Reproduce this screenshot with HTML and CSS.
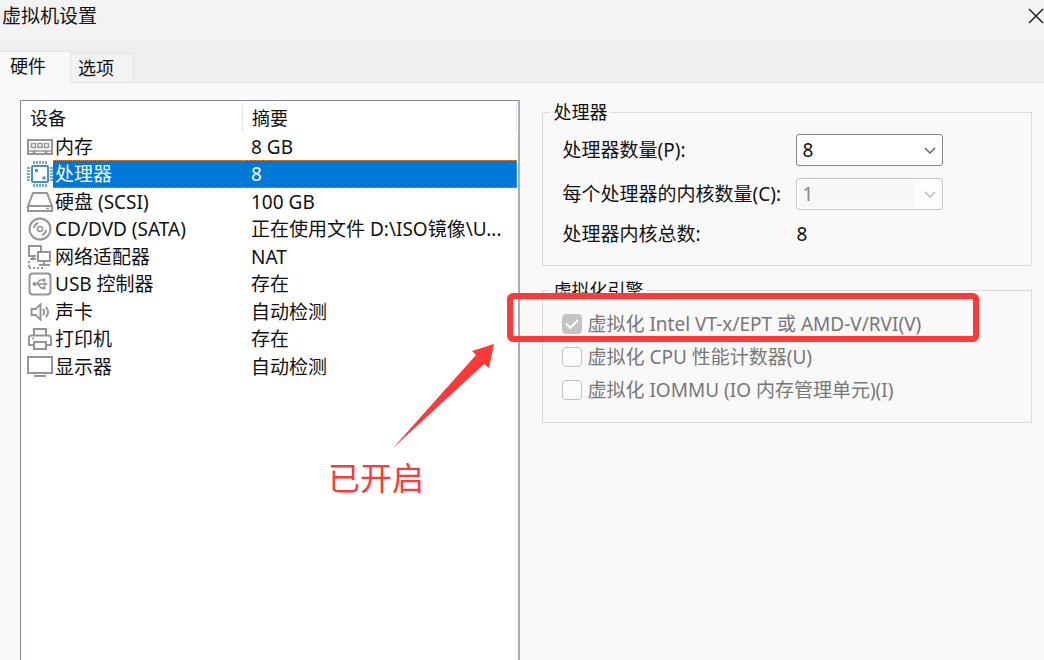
FILE: index.html
```
<!DOCTYPE html>
<html lang="zh-CN">
<head>
    <meta charset="utf-8">
    <title>虚拟机设置</title>
    <link rel="stylesheet" href="styles.css">
</head>
<body>
    <div class="dialog">
        <header class="titlebar">
            <h1>虚拟机设置</h1>
            <button class="close" type="button" aria-label="关闭">
                <svg width="16" height="16" viewBox="0 0 16 16"><path d="M1 1l14 14M15 1L1 15"/></svg>
            </button>
        </header>

        <nav class="tabs">
            <button class="tab active" type="button">硬件</button>
            <button class="tab" type="button">选项</button>
        </nav>

        <main class="content">
            <section class="devices">
                <table>
                    <colgroup>
                        <col class="col-icon">
                        <col class="col-name">
                        <col>
                    </colgroup>
                    <thead>
                        <tr><th class="head-name" colspan="2">设备</th><th class="head-summary">摘要</th></tr>
                    </thead>
                    <tbody>
                        <tr>
                            <td class="icon"><svg viewBox="0 0 26 26"><path d="M1 6h24v14h-5l-1-2-1 2H8l-1-2-1 2H1z"/><path class="thin" d="M4.500 9.500h4v4h-4zM11 9.500h4v4h-4zM17.500 9.500h4v4h-4zM2 17h22"/></svg></td>
                            <td>内存</td><td>8 GB</td>
                        </tr>
                        <tr class="selected">
                            <td class="icon cpu"><svg viewBox="0 0 26 26"><rect x="5" y="5" width="16" height="16" rx="1"/><path class="pins" d="M7 0v3M10 0v3M13 0v3M16 0v3M19 0v3M7 23v3M10 23v3M13 23v3M16 23v3M19 23v3M0 7h3M0 10h3M0 13h3M0 16h3M0 19h3M23 7h3M23 10h3M23 13h3M23 16h3M23 19h3"/><path class="dots" d="M8 8h3v3H8zM15.500 15.500h3v3h-3z"/></svg></td>
                            <td>处理器</td><td>8</td>
                        </tr>
                        <tr>
                            <td class="icon"><svg viewBox="0 0 26 26"><path d="M6 4h14l5 13v5H1v-5zM1 17h24"/><path class="thin" d="M19 19.500h3"/></svg></td>
                            <td>硬盘 (SCSI)</td><td>100 GB</td>
                        </tr>
                        <tr>
                            <td class="icon"><svg viewBox="0 0 26 26"><circle cx="13" cy="13" r="10.500"/><circle class="thin" cx="13" cy="13" r="2.500"/><path d="M7 12a6 6 0 0 1 4-5M19 14a6 6 0 0 1-4 5"/></svg></td>
                            <td>CD/DVD (SATA)</td><td>正在使用文件 D:\ISO镜像\U...</td>
                        </tr>
                        <tr>
                            <td class="icon"><svg viewBox="0 0 26 26"><path d="M9 12H2V2h12v5M6 12v3M3 15h6M11 8h12v9H11zM17 17v3M12 21h11"/><path class="dashed" d="M2 17v8M2 24h14"/></svg></td>
                            <td>网络适配器</td><td>NAT</td>
                        </tr>
                        <tr>
                            <td class="icon"><svg viewBox="0 0 26 26"><rect x="2.500" y="2.500" width="21" height="21" rx="3"/><path class="thin" d="M7 13h10M9.500 13l3.500-4h3M11 13l3 4h2"/><circle class="fill" cx="7.500" cy="13" r="2"/><path class="fill" d="M17 11l4 2-4 2zM15.500 7.500h3v3h-3zM15.500 15.500h3v3h-3z"/></svg></td>
                            <td>USB 控制器</td><td>存在</td>
                        </tr>
                        <tr>
                            <td class="icon"><svg viewBox="0 0 26 26"><path d="M4.500 10h4l5-4.500v15l-5-4.500h-4zM16 10q2.500 3 0 6M19 8q4 5 0 10"/></svg></td>
                            <td>声卡</td><td>自动检测</td>
                        </tr>
                        <tr>
                            <td class="icon"><svg viewBox="0 0 26 26"><path d="M7 9V3h12v6M7 19H2v-7q0-2.500 2.500-2.500h17Q24 9.500 24 12v7h-5M7 16h12v7H7z"/><path class="thin" d="M5 12.500h2"/></svg></td>
                            <td>打印机</td><td>存在</td>
                        </tr>
                        <tr>
                            <td class="icon"><svg viewBox="0 0 26 26"><path d="M1 3h24v16H1zM7 22h12"/></svg></td>
                            <td>显示器</td><td>自动检测</td>
                        </tr>
                    </tbody>
                </table>

                <div class="note">
                    <svg width="104" height="106" viewBox="0 0 104 106"><path d="M1 104L84 11 80 7 102 0 97 24 92 20z"/></svg>
                    <p>已开启</p>
                </div>
            </section>

            <form class="settings">
                <fieldset>
                    <legend>处理器</legend>
                    <div class="fields">
                        <label for="cpus">处理器数量(P):</label>
                        <div class="select">
                            <select id="cpus"><option>8</option></select>
                            <svg width="12" height="8" viewBox="0 0 12 8"><path d="M1 1l5 5 5-5"/></svg>
                        </div>
                        <label for="cores">每个处理器的内核数量(C):</label>
                        <div class="select disabled">
                            <select id="cores" disabled><option>1</option></select>
                            <svg width="12" height="8" viewBox="0 0 12 8"><path d="M1 1l5 5 5-5"/></svg>
                        </div>
                        <label for="total">处理器内核总数:</label>
                        <output id="total">8</output>
                    </div>
                </fieldset>

                <fieldset class="engine">
                    <legend>虚拟化引擎</legend>
                    <div class="checks">
                        <label><input type="checkbox" checked disabled>虚拟化 Intel VT-x/EPT 或 AMD-V/RVI(V)</label>
                        <label><input type="checkbox" disabled>虚拟化 CPU 性能计数器(U)</label>
                        <label><input type="checkbox" disabled>虚拟化 IOMMU (IO 内存管理单元)(I)</label>
                    </div>
                    <div class="highlight"></div>
                </fieldset>
            </form>
        </main>
    </div>
</body>
</html>
```
FILE: styles.css
```
* {
    box-sizing: border-box;
}

body {
    margin: 0;
    font-family: "Noto Sans", "Noto Sans CJK SC", sans-serif;
    font-size: 18px;
    line-height: 24px;
    color: #111;
    background-color: #f9f9f9;
}

button,
select {
    font: inherit;
    color: inherit;
}

svg {
    display: block;
    fill: none;
}

.dialog {
    display: flex;
    flex-direction: column;
    height: 100vh;
    overflow: hidden;
}

/* Title bar */
.titlebar {
    display: flex;
    justify-content: space-between;
    height: 40px;
    padding: 4px 0 0 2px;
    background-color: #f3f3f3;
}

h1 {
    margin: 0;
    font-size: 19px;
    line-height: 24px;
    font-weight: 400;
}

.close {
    height: 24px;
    padding: 0;
    border: none;
    background: none;
}

.close path {
    stroke: #222;
    stroke-width: 1.5;
}

/* Tabs */
.tabs {
    display: flex;
    align-items: flex-end;
    height: 43px;
    background-color: #efefef;
    box-shadow: inset 0 -1px #e5e5e5;
}

.tab {
    height: 30px;
    padding: 0 19px 0 7px;
    border: 1px solid #e5e5e5;
    border-left: none;
    background-color: #f3f3f3;
}

.tab.active {
    height: 32px;
    padding: 0 24px 4px 10px;
    border-bottom: none;
    background-color: #f9f9f9;
}

.content {
    display: flex;
    flex: 1;
    gap: 22px;
    padding: 17px 12px 0 20px;
    min-height: 0;
}

/* Device list */
.devices {
    position: relative;
    flex: 499;
    min-width: 0;
    border: 1px solid #828a99;
    border-right: 2px solid #a9adb5;
    border-bottom: none;
    background-color: #fff;
}

table {
    width: 100%;
    padding-right: 1px;
    table-layout: fixed;
    border-collapse: separate;
    border-spacing: 0;
}

.col-icon {
    width: 32px;
}

.col-name {
    width: 190px;
}

th {
    height: 32px;
    padding: 2px 0 0 9px;
    font-weight: 400;
    text-align: left;
    background: linear-gradient(#e5e5e5, #e5e5e5) right bottom / 1px 30px no-repeat;
}

td {
    height: 27px;
    padding: 0 0 0 2px;
    font-size: 19px;
    line-height: 24px;
    white-space: nowrap;
}

tr:nth-child(even) td {
    height: 28px;
}

td:last-child {
    padding-left: 8px;
}

td.icon {
    padding: 0 0 0 6px;
}

.icon svg {
    width: 26px;
    height: 26px;
    stroke: #969696;
    stroke-width: 2;
}

.icon .thin {
    stroke-width: 1.5;
}

.icon .fill {
    fill: #969696;
    stroke: none;
}

.icon .dashed {
    stroke-dasharray: 2 2;
}

.cpu svg {
    stroke: #4a90c4;
}

.cpu .pins {
    stroke-width: 1.5;
}

.cpu .dots {
    fill: #4a90c4;
    stroke: none;
}

.selected td:not(.icon) {
    color: #fff;
    background-color: #0078d7;
    border-top: 1px dotted #e08a40;
    border-bottom: 1px dotted #e08a40;
}

.selected td:last-child {
    border-right: 1px dotted #e08a40;
}

/* Red arrow with its caption, over the list */
.note {
    position: absolute;
    top: 243px;
    left: 307px;
    color: #fd3939;
}

.note svg {
    margin-left: 64px;
    fill: #fd3939;
}

.note p {
    margin: 8px 0 0;
    font-size: 32px;
    line-height: 40px;
}

/* Settings */
.settings {
    flex: 491;
    min-width: 0;
    font-size: 19px;
}

fieldset {
    position: relative;
    margin: 0;
    padding: 10px 19px 19px;
    border: 1px solid #dcdcdc;
}

legend {
    margin-left: -12px;
    padding: 0 3px;
    font-size: 18px;
}

.fields {
    display: grid;
    grid-template-columns: 234px 147px;
    row-gap: 12px;
    align-items: center;
}

.select {
    position: relative;
}

select {
    display: block;
    width: 100%;
    height: 32px;
    padding: 0 5px;
    border: 1px solid #858585;
    border-radius: 3px;
    appearance: none;
    background-color: #fff;
}

.select svg {
    position: absolute;
    top: 13px;
    right: 7px;
    stroke: #666;
    stroke-width: 1.5;
}

.disabled select {
    border-color: #c8c8c8;
    color: #888;
    opacity: 1;
    background: linear-gradient(#f7f7f7, #f7f7f7) 2px 2px / 115px 26px no-repeat #fdfdfd;
}

.disabled svg {
    stroke: #bbb;
}

.engine {
    margin-top: 12px;
    padding-bottom: 20px;
}

.checks {
    display: grid;
    gap: 9px;
    color: #777;
}

.checks label {
    display: flex;
    align-items: center;
    gap: 5px;
    white-space: nowrap;
}

.checks input {
    display: grid;
    place-items: center;
    width: 20px;
    height: 20px;
    margin: 0;
    border: 1px solid #c4c4c4;
    border-radius: 4px;
    appearance: none;
    background-color: #fbfbfb;
}

.checks input:checked {
    background-color: #c4c4c4;
}

.checks input:checked::after {
    content: "";
    width: 10px;
    height: 5px;
    margin-bottom: 3px;
    border: solid #fff;
    border-width: 0 0 2px 2px;
    transform: rotate(-45deg);
}

/* Red frame round the first option */
.highlight {
    position: absolute;
    top: -9px;
    left: -36px;
    right: 52px;
    height: 49px;
    border: 6px solid #fd3939;
    border-radius: 6px;
}
```
